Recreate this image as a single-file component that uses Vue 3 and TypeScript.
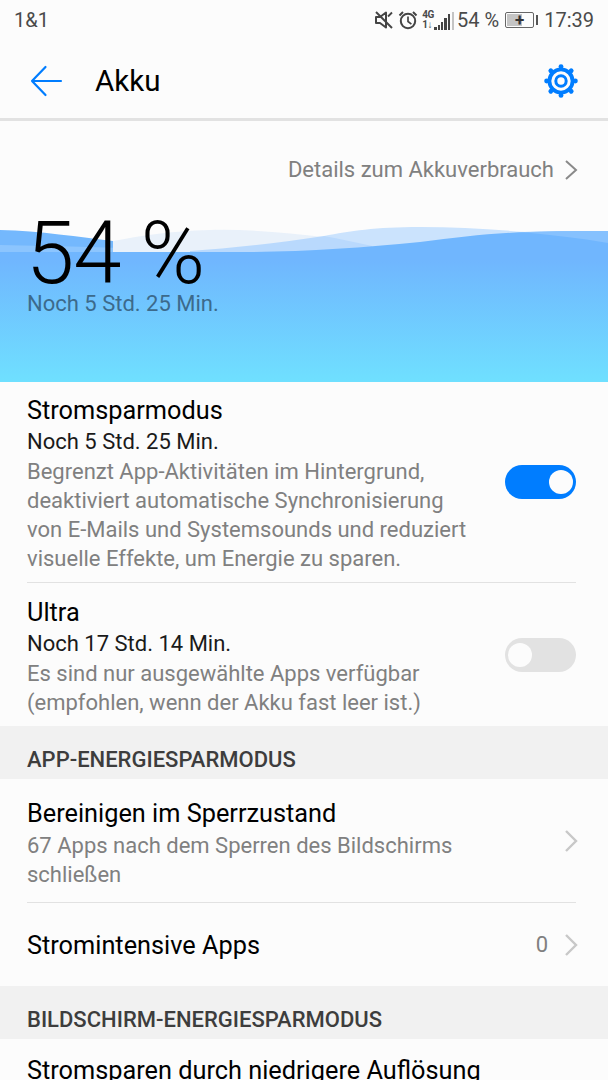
<script setup lang="ts">
const descLines = [
  'Begrenzt App-Aktivitäten im Hintergrund,',
  'deaktiviert automatische Synchronisierung',
  'von E-Mails und Systemsounds und reduziert',
  'visuelle Effekte, um Energie zu sparen.',
]
const signalBars = [3, 5, 8, 12, 16]
const gearTeeth = [0, 45, 90, 135, 180, 225, 270, 315]
</script>

<template>
  <div class="page">
    <div class="status">
      <span class="carrier">1&amp;1</span>
      <div class="status-right">
        <svg class="ic-mute" width="20" height="20" viewBox="0 0 20 20" fill="none" stroke="#444" stroke-width="2">
          <path d="M2 7h4l6-4.5v15L6 13H2z" stroke-linejoin="round" />
          <path d="M2 2l16 16" />
          <path d="M18 2.5l-4 4" stroke-width="1.8" />
        </svg>
        <svg class="ic-alarm" width="20" height="20" viewBox="0 0 20 20" fill="none" stroke="#444" stroke-width="2">
          <circle cx="10" cy="11" r="7.2" />
          <path d="M10 6.5v5l3.4 2.6" stroke-width="1.7" />
          <path d="M1.5 5.5L5 2M18.5 5.5L15 2" />
        </svg>
        <div class="signal">
          <div class="net">
            <span>4G</span>
            <span>1↓</span>
          </div>
          <div class="bars">
            <i v-for="h in signalBars" :key="h" :style="{ height: h + 'px' }" />
          </div>
          <i class="bar-dim" />
        </div>
        <span class="pct">54 %</span>
        <div class="battery">
          <div class="batt-body">
            <div class="batt-fill" />
            <span class="batt-plus">+</span>
          </div>
          <i class="batt-tip" />
        </div>
        <span class="clock">17:39</span>
      </div>
    </div>

    <header class="appbar">
      <svg width="34" height="32" viewBox="0 0 34 32" fill="none" stroke="#007dff" stroke-width="2.2" stroke-linecap="round" stroke-linejoin="round">
        <path d="M3 16h29M16.5 2L3 16l13.5 14" />
      </svg>
      <h1 class="title">Akku</h1>
      <svg class="gear" width="36" height="36" viewBox="0 0 36 36" fill="none" stroke="#007dff">
        <circle cx="18" cy="18" r="11.6" stroke-width="3.8" />
        <circle cx="18" cy="18" r="5.2" stroke-width="3" />
        <circle v-for="a in gearTeeth" :key="a" cx="18" cy="3.6" r="2.4" fill="#007dff" stroke="none" :transform="`rotate(${a} 18 18)`" />
      </svg>
    </header>
    <div class="appbar-line" />

    <section class="hero">
      <svg class="waves" width="608" height="60" viewBox="0 0 608 60">
        <path d="M0 30C40 31 80 37 113 41C140 46 170 50 200 52V60H0Z" fill="#74b8fd" />
        <path d="M0 45C60 46 130 48 200 51L260 60H0Z" fill="#8cc5fe" />
        <path d="M113 41C140 36 170 31 210 30C250 29 290 33 324 37C345 41 365 45 385 47V60H113Z" fill="#e9f1fa" />
        <path d="M324 36C350 31 375 27 420 27C455 27 490 29 525 32V60H324Z" fill="#cbe3fd" />
        <path d="M190 51C230 48 280 43 324 36C340 39 355 42 372 46V60H190Z" fill="#b9d9fd" />
        <path d="M0 52H240C300 52 360 48 420 42C460 37 490 33 530 32C560 31 590 31 608 31V60H0Z" fill="#70b6fe" />
        <path d="M521 32C555 31 585 31 608 31V43C580 38 550 35 521 32Z" fill="#86c1fe" />
      </svg>
      <div class="hero-link">
        <span>Details zum Akkuverbrauch</span>
        <svg width="14" height="22" viewBox="0 0 14 22" fill="none" stroke="#8a8a8a" stroke-width="2">
          <path d="M2 2l10 9-10 9" />
        </svg>
      </div>
      <div class="hero-level">54 %</div>
      <div class="hero-left">Noch 5 Std. 25 Min.</div>
    </section>

    <section class="card">
      <div class="row switch-row first">
        <div class="row-text">
          <div class="row-title">Stromsparmodus</div>
          <div class="row-sub">Noch 5 Std. 25 Min.</div>
          <div v-for="l in descLines" :key="l" class="row-desc">{{ l }}</div>
        </div>
        <div class="toggle on"><i /></div>
      </div>
      <div class="row switch-row second">
        <div class="row-text">
          <div class="row-title">Ultra</div>
          <div class="row-sub">Noch 17 Std. 14 Min.</div>
          <div class="row-desc">Es sind nur ausgewählte Apps verfügbar</div>
          <div class="row-desc">(empfohlen, wenn der Akku fast leer ist.)</div>
        </div>
        <div class="toggle"><i /></div>
      </div>
    </section>

    <div class="section-head">APP-ENERGIESPARMODUS</div>
    <section class="card">
      <div class="row nav-row lock">
        <div class="row-text">
          <div class="row-title">Bereinigen im Sperrzustand</div>
          <div class="row-desc">67 Apps nach dem Sperren des Bildschirms</div>
          <div class="row-desc">schließen</div>
        </div>
        <svg class="chev" width="14" height="24" viewBox="0 0 14 24" fill="none" stroke="#c8c8c8" stroke-width="2.4">
          <path d="M2 2l10 10L2 22" />
        </svg>
      </div>
      <div class="row nav-row intensive">
        <div class="row-text">
          <div class="row-title">Stromintensive Apps</div>
        </div>
        <span class="count">0</span>
        <svg class="chev" width="14" height="24" viewBox="0 0 14 24" fill="none" stroke="#c8c8c8" stroke-width="2.4">
          <path d="M2 2l10 10L2 22" />
        </svg>
      </div>
    </section>

    <div class="section-head">BILDSCHIRM-ENERGIESPARMODUS</div>
    <section class="card">
      <div class="row last">
        <div class="row-title">Stromsparen durch niedrigere Auflösung</div>
      </div>
    </section>
  </div>
</template>

<style>
html, body {
  margin: 0;
  background: #fcfcfc;
  overflow: hidden;
}
</style>

<style scoped>
.page {
  width: 608px;
  height: 1080px;
  overflow: hidden;
  background: #fcfcfc;
  font-family: Roboto, "Noto Sans", sans-serif;
  color: #000;
}

.status {
  height: 40px;
  display: flex;
  align-items: center;
  justify-content: space-between;
  padding: 0 14px;
  color: #4a4a4a;
  font-size: 20px;
  box-sizing: border-box;
}

.status-right {
  display: flex;
  align-items: center;
}

.ic-mute {
  margin-right: 4px;
}

.signal {
  display: flex;
  align-items: flex-end;
  margin-left: 4px;
}

.net {
  display: flex;
  flex-direction: column;
  font-size: 10px;
  font-weight: 700;
  line-height: 10px;
  width: 12px;
  letter-spacing: -0.5px;
}

.bars {
  display: flex;
  align-items: flex-end;
  gap: 1px;
}

.bars i {
  width: 2.4px;
  background: #444;
}

.bar-dim {
  width: 2px;
  height: 18px;
  background: #c4c4c4;
  margin-left: 2px;
}

.pct {
  margin-left: 3px;
}

.battery {
  display: flex;
  align-items: center;
  margin-left: 6px;
}

.batt-body {
  position: relative;
  width: 27px;
  height: 14px;
  border: 1.5px solid #666;
  border-radius: 2px;
  box-sizing: content-box;
  display: flex;
  align-items: center;
  justify-content: center;
}

.batt-fill {
  position: absolute;
  left: 1px;
  top: 1px;
  bottom: 1px;
  width: 54%;
  background: #c4c4c4;
}

.batt-plus {
  position: relative;
  font-size: 17px;
  font-weight: 700;
  line-height: 14px;
  color: #333;
}

.batt-tip {
  width: 2px;
  height: 10px;
  margin-left: 2px;
  background: #555;
}

.clock {
  margin-left: 6px;
}

.appbar {
  height: 78px;
  display: flex;
  align-items: center;
  padding: 4px 29px 0 29px;
  box-sizing: border-box;
}

.title {
  margin: 2px 0 0 32px;
  flex: 1;
  font-size: 29.5px;
  font-weight: 400;
  line-height: 1;
}

.appbar-line {
  height: 3px;
  background: #e2e2e2;
}

.hero {
  position: relative;
  height: 261px;
  background: linear-gradient(#70b6fe, #6fe0ff) 0 139px / 100% 122px no-repeat;
  overflow: hidden;
}

.waves {
  position: absolute;
  left: 0;
  top: 79px;
}

.hero-link {
  position: relative;
  display: flex;
  justify-content: flex-end;
  align-items: center;
  gap: 10px;
  padding: 36px 30px 0 0;
  font-size: 22px;
  color: #808080;
  line-height: 26px;
}

.hero-level {
  position: relative;
  margin: 32px 0 0 26px;
  font-size: 87px;
  line-height: 76px;
  font-weight: 300;
  letter-spacing: -1px;
}

.hero-left {
  position: relative;
  font-size: 22px;
  line-height: 26px;
  margin-left: 27px;
  color: #3c6a8c;
}

.row {
  margin: 0 32px 0 27px;
  display: flex;
  align-items: center;
}

.row-text {
  flex: 1;
  min-width: 0;
}

.switch-row.first {
  height: 201px;
  border-bottom: 1px solid #e2e2e2;
  box-sizing: border-box;
}

.switch-row .row-text {
  padding-top: 4px;
}

.switch-row.second {
  height: 143px;
}

.row-title {
  font-size: 25.3px;
  line-height: 32px;
  white-space: nowrap;
}

.row-sub {
  font-size: 22px;
  line-height: 30px;
  color: #1a1a1a;
}

.row-desc {
  font-size: 22px;
  line-height: 29px;
  color: #808080;
  white-space: nowrap;
}

.toggle {
  width: 71px;
  height: 34px;
  border-radius: 17px;
  background: #e2e2e2;
  flex-shrink: 0;
  display: flex;
  align-items: center;
  padding: 0 3px;
  box-sizing: border-box;
}

.toggle i {
  width: 24px;
  height: 24px;
  border-radius: 50%;
  background: #fcfcfc;
}

.toggle.on {
  background: #007dff;
  justify-content: flex-end;
}

.section-head {
  height: 53px;
  background: #f1f1f1;
  padding-left: 27px;
  font-size: 22px;
  font-weight: 500;
  line-height: 67px;
  color: #3d3d3d;
  box-sizing: border-box;
}

.nav-row.lock {
  height: 124px;
  border-bottom: 1px solid #e2e2e2;
  box-sizing: border-box;
}

.nav-row.lock .row-text {
  padding-top: 5px;
}

.nav-row.lock .row-title {
  margin-bottom: 1px;
}

.nav-row.intensive {
  height: 83px;
}

.nav-row.intensive .row-text {
  padding-top: 2px;
}

.chev {
  margin-right: -2px;
  flex-shrink: 0;
}

.count {
  font-size: 22px;
  color: #808080;
  margin-right: 16px;
}

.last {
  padding-top: 16px;
}
</style>
